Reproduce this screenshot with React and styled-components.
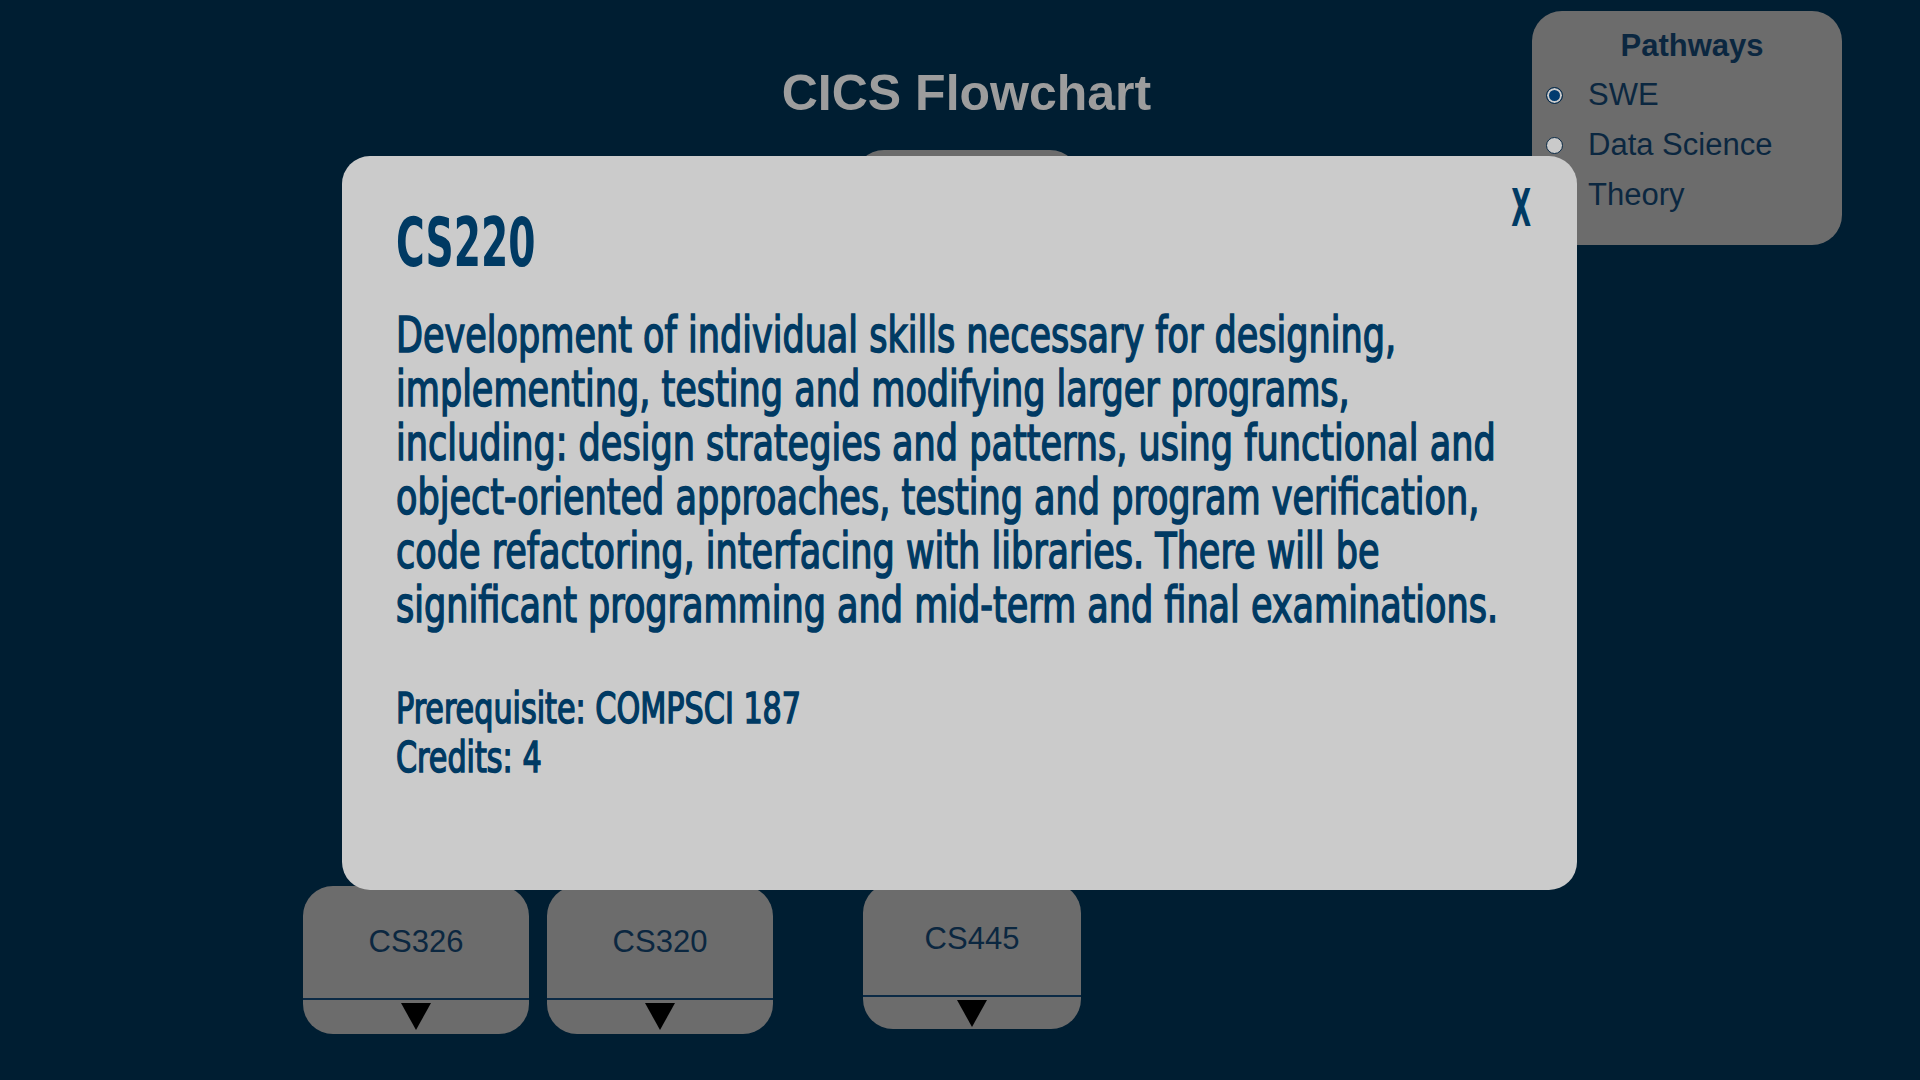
import React, { useState } from "react";
import styled, { createGlobalStyle } from "styled-components";

const GlobalStyle = createGlobalStyle`
  html, body {
    margin: 0;
    padding: 0;
    background: #001e32;
    font-family: "Liberation Sans", Arial, sans-serif;
    overflow: hidden;
  }
  * {
    box-sizing: border-box;
  }
`;

const Page = styled.main`
  min-height: 100vh;
  padding-left: 13px;
  display: flex;
  flex-direction: column;
  align-items: center;
`;

const Title = styled.h1`
  margin: 68px 0 0;
  font-size: 50px;
  line-height: 50px;
  font-weight: 700;
  color: #9d9d9d;
`;

const Chart = styled.section`
  width: 100%;
  display: flex;
  flex-direction: column;
  align-items: center;
  margin-top: 32px;
`;

const Row = styled.div`
  display: flex;
  align-items: flex-start;
  gap: 18px;
  width: 100%;
  justify-content: ${(p) => (p.$start ? "flex-start" : "center")};
  padding-left: ${(p) => (p.$start ? "290px" : "0")};
  margin-top: ${(p) => p.$top || 0}px;
`;

const Gap = styled.div`
  width: ${(p) => p.$w}px;
`;

const Node = styled.div`
  width: ${(p) => p.$w || 226}px;
  height: ${(p) => p.$h || 148}px;
  background: #6c6c6c;
  border-radius: 30px;
  display: flex;
  flex-direction: column;
  overflow: hidden;
  margin-top: ${(p) => -(p.$lift || 0)}px;
`;

const NodeLabel = styled.div`
  height: 112px;
  display: flex;
  align-items: center;
  justify-content: center;
  font-size: 31px;
  color: #0b2740;
`;

const Divider = styled.div`
  height: 2px;
  background: #0b2a45;
`;

const ArrowArea = styled.div`
  flex: 1;
  display: flex;
  justify-content: center;
  padding-top: 3px;
`;

const Triangle = styled.span`
  width: 0;
  height: 0;
  border-left: 15.5px solid transparent;
  border-right: 15.5px solid transparent;
  border-top: 27px solid #000;
`;

const PathwayPanel = styled.aside`
  position: absolute;
  top: 11px;
  left: 1532px;
  width: 310px;
  height: 234px;
  background: #6c6c6c;
  border-radius: 30px;
  padding: 18px 4px 0 14px;
  color: #0b2740;
`;

const PanelTitle = styled.h3`
  margin: 0 0 7px;
  text-align: center;
  font-size: 31px;
  line-height: 34px;
  font-weight: 700;
`;

const Option = styled.label`
  display: flex;
  align-items: center;
  gap: 25px;
  height: 50px;
  font-size: 31px;
  line-height: 50px;
`;

const Radio = styled.input`
  appearance: none;
  margin: 0;
  width: 17px;
  height: 17px;
  border-radius: 50%;
  border: 1.5px solid #0b2a45;
  background: #cacaca;

  &:checked {
    background: #003b6f;
    box-shadow: inset 0 0 0 2px #cacaca;
  }
`;

const Modal = styled.div`
  position: fixed;
  top: 156px;
  left: 342px;
  width: 1235px;
  height: 734px;
  background: #cbcbcb;
  border-radius: 28px;
  padding: 53px 54px 0;
  color: #003a63;
  font-family: "DejaVu Sans Condensed", "DejaVu Sans", sans-serif;
  font-stretch: condensed;
`;

/* no narrow display face is installed, so the condensed face is squeezed further */
const Squeezed = styled.div`
  transform: scaleX(${(p) => p.$k});
  transform-origin: ${(p) => (p.$right ? "right top" : "left top")};
  white-space: nowrap;
`;

const Close = styled.button`
  position: absolute;
  top: 26px;
  right: 46px;
  padding: 0;
  border: none;
  background: none;
  font: inherit;
  font-size: 52px;
  line-height: 52px;
  font-weight: 700;
  color: inherit;
  cursor: pointer;
`;

const CourseName = styled.h2`
  margin: 0;
  font-size: 68px;
  line-height: 68px;
  font-weight: 700;
`;

const Description = styled.p`
  margin: 32px 0 0;
  font-size: 49px;
  line-height: 54px;
  font-weight: 400;
  -webkit-text-stroke: 1.5px #003a63;
`;

const Meta = styled.p`
  margin: 51px 0 0;
  font-size: 42px;
  line-height: 49px;
  font-weight: 400;
  -webkit-text-stroke: 1.5px #003a63;
`;

const descLines = [
  "Development of individual skills necessary for designing,",
  "implementing, testing and modifying larger programs,",
  "including: design strategies and patterns, using functional and",
  "object-oriented approaches, testing and program verification,",
  "code refactoring, interfacing with libraries. There will be",
  "significant programming and mid-term and final examinations.",
];

function CourseNode({ name, w, h, lift }) {
  return (
    <Node $w={w} $h={h} $lift={lift}>
      <NodeLabel>{name}</NodeLabel>
      <Divider />
      <ArrowArea>
        <Triangle />
      </ArrowArea>
    </Node>
  );
}

export default function App() {
  const [pathway, setPathway] = useState("SWE");
  const [open, setOpen] = useState(true);

  return (
    <>
      <GlobalStyle />
      <Page>
        <Title>CICS Flowchart</Title>
        <Chart>
          <Row>
            <CourseNode name="CS220" />
          </Row>
          <Row $start $top={588}>
            <CourseNode name="CS326" />
            <CourseNode name="CS320" />
            <Gap $w={54} />
            <CourseNode name="CS445" w={218} h={146} lift={3} />
          </Row>
        </Chart>
      </Page>

      <PathwayPanel>
        <PanelTitle>Pathways</PanelTitle>
        {["SWE", "Data Science", "Theory"].map((p) => (
          <Option key={p}>
            <Radio
              type="radio"
              name="pathway"
              checked={pathway === p}
              onChange={() => setPathway(p)}
            />
            {p}
          </Option>
        ))}
      </PathwayPanel>

      {open && (
        <Modal>
          <Close onClick={() => setOpen(false)}>
            <Squeezed $k={0.55} $right>X</Squeezed>
          </Close>
          <CourseName>
            <Squeezed $k={0.64}>CS220</Squeezed>
          </CourseName>
          <Description>
            <Squeezed $k={0.795}>
              {descLines.map((l, i) => (
                <React.Fragment key={i}>
                  {l}
                  {i < descLines.length - 1 && <br />}
                </React.Fragment>
              ))}
            </Squeezed>
          </Description>
          <Meta>
            <Squeezed $k={0.8}>
              Prerequisite: COMPSCI 187
              <br />
              Credits: 4
            </Squeezed>
          </Meta>
        </Modal>
      )}
    </>
  );
}
